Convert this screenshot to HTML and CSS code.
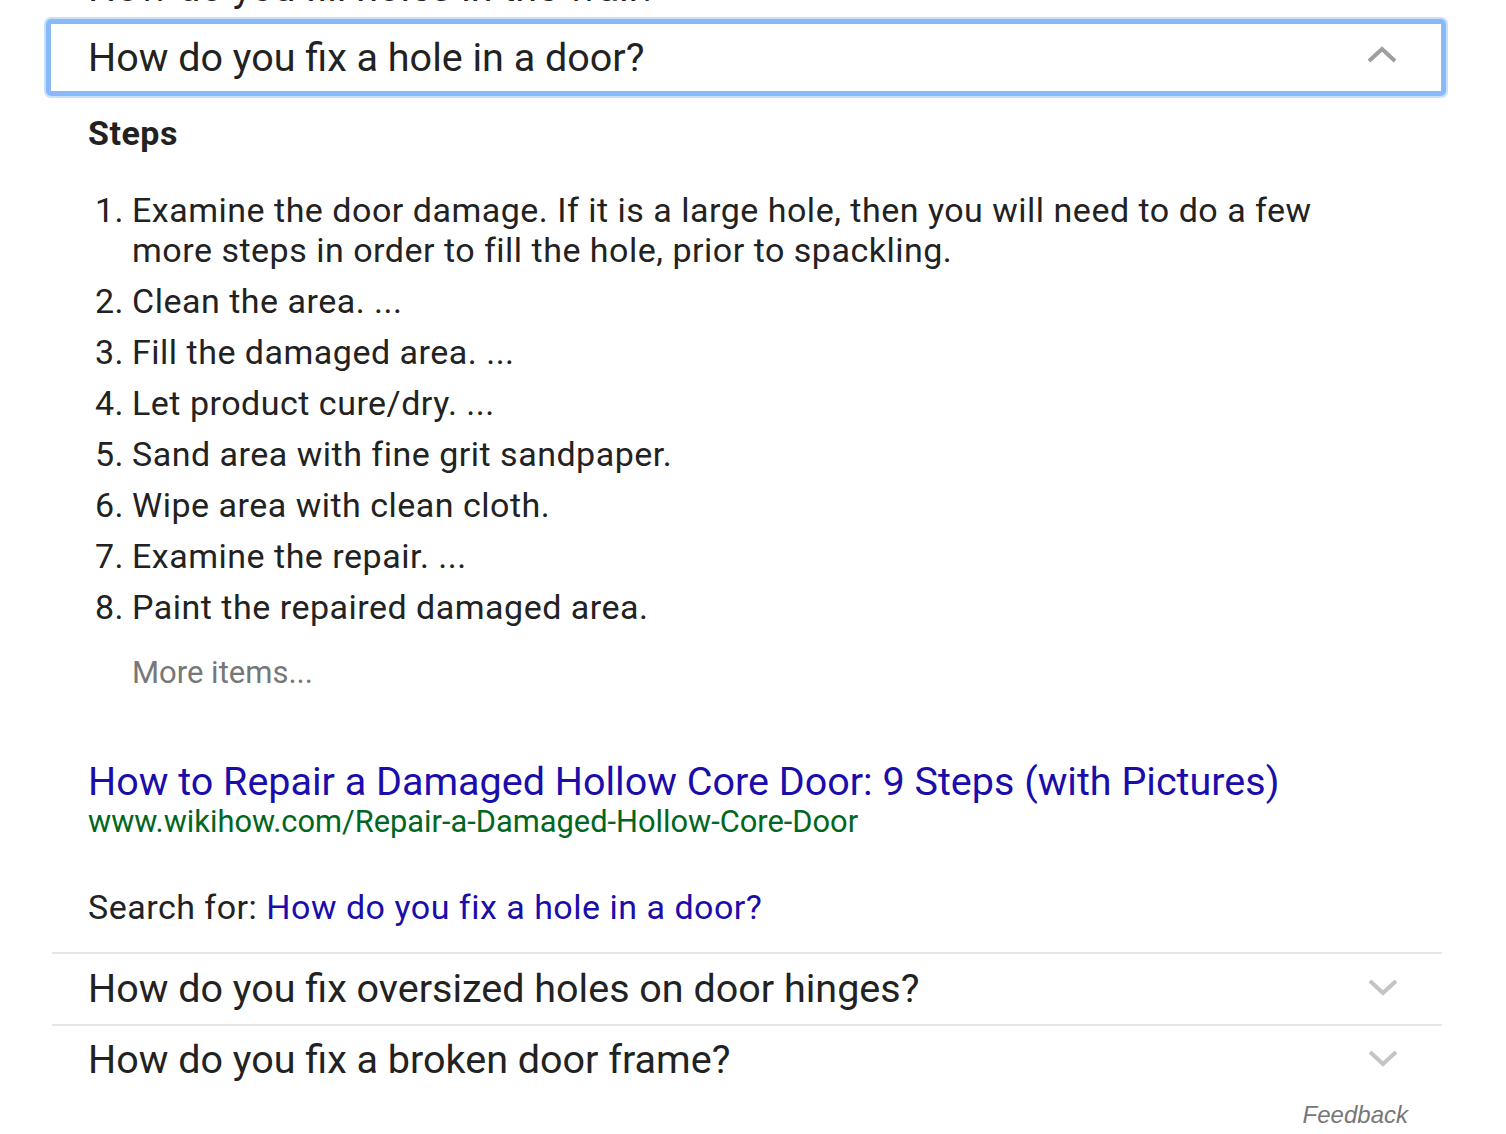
FILE: index.html
```html
<!DOCTYPE html>
<html lang="en">
<head>
<meta charset="utf-8">
<title>People also ask</title>
<link rel="stylesheet" href="styles.css">
</head>
<body>
<div class="paa">
  <div class="q-prev">How do you fill holes in the wall?</div>

  <div class="q-open">
    <span class="q-text">How do you fix a hole in a door?</span>
    <svg class="chev chev-up" width="30" height="18" viewBox="0 0 30 18"><polyline points="2,15 15,3 28,15" fill="none" stroke="#9e9e9e" stroke-width="4"/></svg>
  </div>

  <div class="answer">
    <div class="steps-title">Steps</div>
    <ol class="steps">
      <li>Examine the door damage. If it is a large hole, then you will need to do a few more steps in order to fill the hole, prior to spackling.</li>
      <li>Clean the area. ...</li>
      <li>Fill the damaged area. ...</li>
      <li>Let product cure/dry. ...</li>
      <li>Sand area with fine grit sandpaper.</li>
      <li>Wipe area with clean cloth.</li>
      <li>Examine the repair. ...</li>
      <li>Paint the repaired damaged area.</li>
    </ol>
    <div class="more">More items...</div>
    <a class="res-title" href="#">How to Repair a Damaged Hollow Core Door: 9 Steps (with Pictures)</a>
    <div class="res-url">www.wikihow.com/Repair-a-Damaged-Hollow-Core-Door</div>
    <div class="search-for">Search for: <a href="#">How do you fix a hole in a door?</a></div>
  </div>

  <div class="q-row">
    <span class="q-text">How do you fix oversized holes on door hinges?</span>
    <svg class="chev chev-down" width="30" height="18" viewBox="0 0 30 18"><polyline points="2,3 15,15 28,3" fill="none" stroke="#c4c4c4" stroke-width="4"/></svg>
  </div>
  <div class="q-row">
    <span class="q-text">How do you fix a broken door frame?</span>
    <svg class="chev chev-down" width="30" height="18" viewBox="0 0 30 18"><polyline points="2,3 15,15 28,3" fill="none" stroke="#c4c4c4" stroke-width="4"/></svg>
  </div>

  <div class="feedback">Feedback</div>
</div>
</body>
</html>
```

FILE: styles.css
```css
html, body {
  margin: 0;
  padding: 0;
  background: #fff;
}

body {
  font-family: Roboto, "Noto Sans", Arial, sans-serif;
  color: #222;
  overflow: hidden;
}

.paa {
  margin-left: 52px;
  width: 1390px;
}

.q-prev {
  font-size: 39.5px;
  line-height: 48px;
  margin-top: -36px;
  padding-left: 36px;
  height: 48px;
}

.q-open {
  display: flex;
  align-items: center;
  justify-content: space-between;
  height: 67px;
  margin: 7px -4px 0 -6px;
  padding: 0 44px 0 37px;
  border: 5px solid #88baf9;
  border-radius: 5px;
  box-shadow: 0 0 0 2px #c9e0fc;
}

.q-text {
  font-size: 39.5px;
  line-height: 48px;
  white-space: nowrap;
}

.chev {
  flex: none;
  display: block;
}

.chev-up {
  margin-bottom: 5px;
}

.chev-down {
  margin-bottom: 4px;
}

.answer {
  padding-left: 36px;
}

.steps-title {
  font-size: 34px;
  letter-spacing: 0.5px;
  font-weight: 700;
  line-height: 40px;
  margin-top: 17px;
}

.steps {
  list-style: none;
  margin: 37px 0 0 0;
  padding: 0;
  counter-reset: step;
  width: 1250px;
}

.steps li {
  display: flex;
  font-size: 34px;
  letter-spacing: 0.5px;
  line-height: 40px;
  margin-bottom: 11px;
  counter-increment: step;
}

.steps li:last-child {
  margin-bottom: 0;
}

.steps li::before {
  content: counter(step) ".";
  flex: none;
  width: 37px;
  padding-left: 7px;
}

.more {
  font-size: 31px;
  line-height: 36px;
  color: #777;
  margin: 28px 0 0 44px;
}

.res-title {
  display: block;
  font-size: 39.5px;
  line-height: 40px;
  color: #1a0dab;
  text-decoration: none;
  margin-top: 71px;
  white-space: nowrap;
}

.res-url {
  font-size: 30.8px;
  line-height: 36px;
  color: #006621;
  margin-top: 2px;
}

.search-for {
  font-size: 34px;
  letter-spacing: 0.5px;
  line-height: 40px;
  margin-top: 47px;
  padding-bottom: 25px;
}

.search-for a {
  color: #1a0dab;
  text-decoration: none;
}

.q-row {
  display: flex;
  align-items: center;
  justify-content: space-between;
  height: 70px;
  border-top: 2px solid #e6e6e6;
  padding: 0 44px 0 36px;
}

.q-row + .q-row {
  height: 68px;
  padding-bottom: 2px;
}

.feedback {
  font-family: "Liberation Sans", Arial, sans-serif;
  font-style: italic;
  font-size: 24px;
  line-height: 28px;
  color: #777;
  text-align: right;
  padding-right: 34px;
  margin-top: 5px;
}
```
